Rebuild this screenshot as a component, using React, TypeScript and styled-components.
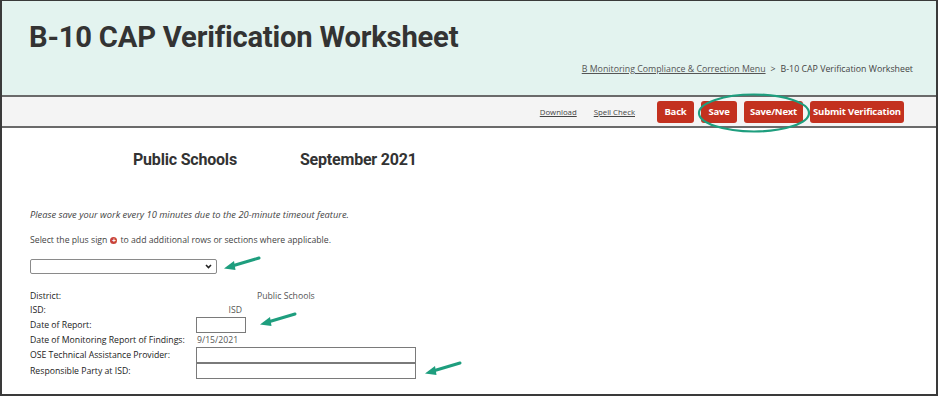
import React from "react";
import styled, { createGlobalStyle } from "styled-components";

const GlobalStyle = createGlobalStyle`
  html, body {
    margin: 0;
    padding: 0;
    background: #ffffff;
  }
  * {
    box-sizing: border-box;
  }
`;

const Frame = styled.div`
  position: relative;
  width: 938px;
  height: 396px;
  border-top: 1px solid #3a3a3a;
  border-left: 2px solid #3a3a3a;
  border-right: 2px solid #3a3a3a;
  border-bottom: 2px solid #3a3a3a;
  overflow: hidden;
  font-family: "Open Sans", "Liberation Sans", sans-serif;
  color: #333;
`;

const Header = styled.header`
  height: 96px;
  background-color: #e3f3ef;
  border-bottom: 2px solid #6a6a6a;
  display: flex;
  flex-direction: column;
  justify-content: space-between;
  padding: 18px 23px 20px 27px;
`;

const Title = styled.h1`
  margin: 0;
  font-family: Roboto, "Liberation Sans", sans-serif;
  font-weight: 700;
  font-size: 29.2px;
  line-height: 36px;
  color: #333;
  letter-spacing: -0.2px;
`;

const Breadcrumb = styled.div`
  align-self: flex-end;
  font-size: 8.8px;
  color: #444;
  display: flex;
  gap: 5px;
`;

const CrumbLink = styled.a`
  color: #555;
  text-decoration: underline;
`;

const Toolbar = styled.div`
  height: 31px;
  background-color: #f4f4f4;
  border-bottom: 2px solid #6a6a6a;
  display: flex;
  align-items: center;
  justify-content: flex-end;
  padding-right: 32px;
`;

const ToolLinks = styled.div`
  display: flex;
  gap: 17px;
  margin-right: 22px;
`;

const ToolLink = styled.a`
  font-size: 7.8px;
  color: #444;
  text-decoration: underline;
`;

const Buttons = styled.div`
  display: flex;
  gap: 7px;
`;

const RedButton = styled.button<{ $w: number }>`
  width: ${(p) => p.$w}px;
  height: 22px;
  border: none;
  border-radius: 3px;
  background-color: #c3311f;
  color: #fff;
  font-family: "Open Sans", "Liberation Sans", sans-serif;
  font-weight: 700;
  font-size: 9.5px;
  padding: 0;
  letter-spacing: -0.2px;
`;

const Content = styled.main`
  padding: 22px 0 0 28px;
`;

const SubHeads = styled.div`
  display: flex;
  gap: 63px;
  padding-left: 103px;
  font-family: Roboto, "Liberation Sans", sans-serif;
  font-weight: 700;
  font-size: 16px;
  color: #333;
  letter-spacing: -0.2px;
`;

const Note = styled.p<{ $italic?: boolean }>`
  margin: 0;
  font-size: ${(p) => (p.$italic ? "9.3px" : "8.7px")};
  font-style: ${(p) => (p.$italic ? "italic" : "normal")};
  color: #444;
  display: flex;
  align-items: center;
  gap: 3px;
  height: 12px;
`;

const Notes = styled.div`
  margin-top: 39px;
  display: flex;
  flex-direction: column;
  gap: 14px;
`;

const PlusIcon = styled.span`
  display: inline-flex;
  width: 7px;
  height: 7px;
  border-radius: 50%;
  background: #c9443a;
  color: #fff;
  font-size: 7px;
  line-height: 7px;
  justify-content: center;
  font-weight: 700;
`;

const Select = styled.div`
  margin-top: 13px;
  width: 187px;
  height: 15px;
  border: 1px solid #8a8a8a;
  border-radius: 2px;
  display: flex;
  align-items: center;
  justify-content: flex-end;
  padding-right: 4px;
`;

const FormGrid = styled.div`
  margin-top: 15px;
  display: grid;
  grid-template-columns: 166px 50px 10px 160px;
  font-size: 8.7px;
  color: #222;
`;

const Label = styled.div`
  grid-column: 1;
  min-height: 14px;
  display: flex;
  align-items: center;
`;

const Value = styled.div<{ $col: string; $right?: boolean }>`
  grid-column: ${(p) => p.$col};
  color: #555;
  display: flex;
  align-items: center;
  justify-content: ${(p) => (p.$right ? "flex-end" : "flex-start")};
  padding-right: ${(p) => (p.$right ? "4px" : "0")};
  padding-left: ${(p) => (p.$right ? "0" : "1px")};
`;

const TextBox = styled.div<{ $col: string; $w: number }>`
  grid-column: ${(p) => p.$col};
  width: ${(p) => p.$w}px;
  height: 16px;
  border: 1px solid #7a7a7a;
  background: #fff;
`;

const Ellipse = styled.svg`
  position: absolute;
  left: 694px;
  top: 91px;
`;

const Arrow = styled.svg<{ $x: number; $y: number }>`
  position: absolute;
  left: ${(p) => p.$x}px;
  top: ${(p) => p.$y}px;
`;

const GreenArrow = ({ x, y }: { x: number; y: number }) => (
  <Arrow $x={x} $y={y} width="40" height="16" viewBox="0 0 40 16">
    <path d="M37 2 L10 10" stroke="#1e9e7e" strokeWidth="3" strokeLinecap="round" />
    <path d="M2 12.5 L12 5 L13.5 14 Z" fill="#1e9e7e" />
  </Arrow>
);

const App = () => {
  return (
    <>
      <GlobalStyle />
      <Frame>
        <Header>
          <Title>B-10 CAP Verification Worksheet</Title>
          <Breadcrumb>
            <CrumbLink>B Monitoring Compliance &amp; Correction Menu</CrumbLink>
            <span>&gt;</span>
            <span>B-10 CAP Verification Worksheet</span>
          </Breadcrumb>
        </Header>
        <Toolbar>
          <ToolLinks>
            <ToolLink>Download</ToolLink>
            <ToolLink>Spell Check</ToolLink>
          </ToolLinks>
          <Buttons>
            <RedButton $w={37}>Back</RedButton>
            <RedButton $w={36}>Save</RedButton>
            <RedButton $w={59}>Save/Next</RedButton>
            <RedButton $w={94}>Submit Verification</RedButton>
          </Buttons>
        </Toolbar>
        <Content>
          <SubHeads>
            <span>Public Schools</span>
            <span>September 2021</span>
          </SubHeads>
          <Notes>
            <Note $italic>Please save your work every 10 minutes due to the 20-minute timeout feature.</Note>
            <Note>
              Select the plus sign <PlusIcon>+</PlusIcon> to add additional rows or sections where applicable.
            </Note>
          </Notes>
          <Select>
            <svg width="7" height="5" viewBox="0 0 7 5">
              <path d="M1 1 L3.5 3.5 L6 1" stroke="#222" strokeWidth="1.6" fill="none" />
            </svg>
          </Select>
          <FormGrid>
            <Label>District:</Label>
            <Value $col="4">Public Schools</Value>
            <Label>ISD:</Label>
            <Value $col="2" $right>ISD</Value>
            <Label>Date of Report:</Label>
            <TextBox $col="2" $w={50} />
            <Label>Date of Monitoring Report of Findings:</Label>
            <Value $col="2 / span 3">9/15/2021</Value>
            <Label>OSE Technical Assistance Provider:</Label>
            <TextBox $col="2 / span 3" $w={220} />
            <Label>Responsible Party at ISD:</Label>
            <TextBox $col="2 / span 3" $w={220} />
          </FormGrid>
        </Content>
        <Ellipse width="116" height="42" viewBox="0 0 116 42">
          <ellipse cx="58" cy="21" rx="55" ry="18.5" fill="none" stroke="#1e9e7e" strokeWidth="2.2" />
        </Ellipse>
        <GreenArrow x={220} y={255} />
        <GreenArrow x={256} y={311} />
        <GreenArrow x={421} y={360} />
      </Frame>
    </>
  );
};

export default App;
